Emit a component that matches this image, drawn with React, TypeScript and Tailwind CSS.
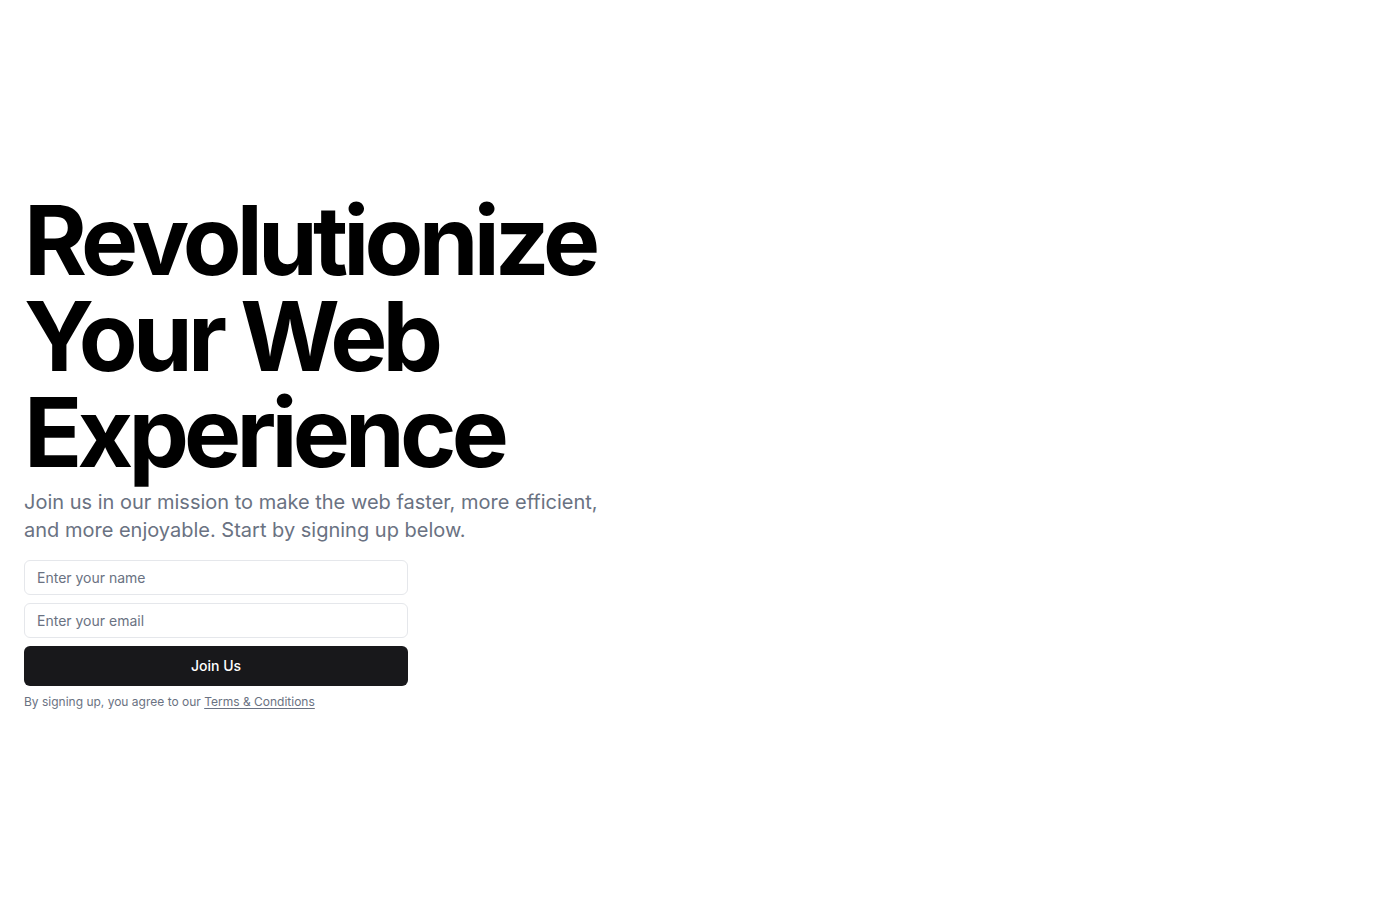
export default function App() {
  return (
    <main
      className="min-h-screen w-full bg-white flex items-center"
      style={{ fontFamily: 'Inter, "Liberation Sans", sans-serif' }}
    >
      <div className="px-6 flex flex-col gap-4">
        <div className="flex flex-col gap-2">
          <h1 className="text-8xl font-bold tracking-tighter leading-none text-black">
            Revolutionize
            <br />
            Your Web
            <br />
            Experience
          </h1>
          <p className="max-w-[600px] text-xl text-gray-500">
            Join us in our mission to make the web faster, more efficient, and more enjoyable. Start by signing up below.
          </p>
        </div>
        <div className="w-full max-w-sm flex flex-col gap-2">
          <form className="flex flex-col gap-2">
            <input
              type="text"
              placeholder="Enter your name"
              className="h-[35px] w-full rounded-md border border-gray-200 px-3 text-sm placeholder:text-gray-500 outline-none"
            />
            <input
              type="email"
              placeholder="Enter your email"
              className="h-[35px] w-full rounded-md border border-gray-200 px-3 text-sm placeholder:text-gray-500 outline-none"
            />
            <button
              type="submit"
              className="h-10 w-full rounded-md bg-[#18181b] text-sm font-medium text-white"
            >
              Join Us
            </button>
          </form>
          <p className="text-xs text-gray-500">
            By signing up, you agree to our{' '}
            <a href="#" className="underline underline-offset-2">
              Terms &amp; Conditions
            </a>
          </p>
        </div>
      </div>
    </main>
  );
}
